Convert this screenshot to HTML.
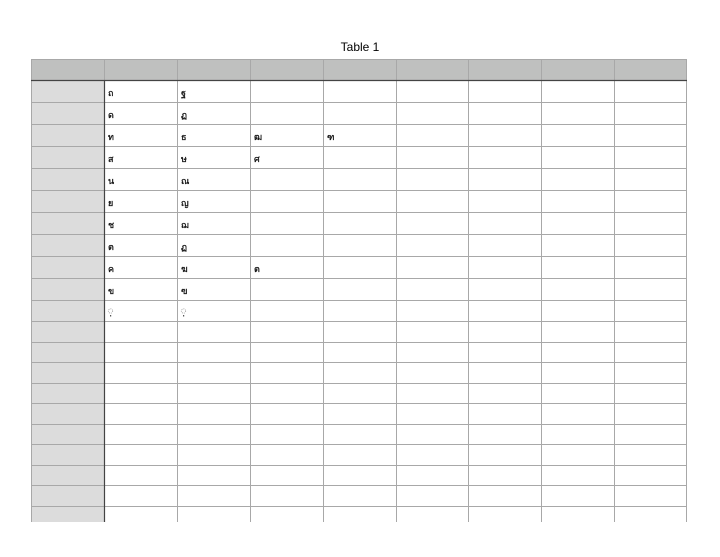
<!DOCTYPE html>
<html><head><meta charset="utf-8"><style>
body{margin:0;background:#fff;width:720px;height:552px;overflow:hidden}
text{font-family:"Liberation Sans","Noto Sans CJK SC",sans-serif}
</style></head><body>
<svg width="720" height="552" xmlns="http://www.w3.org/2000/svg">
<text x="360" y="51" font-size="12" text-anchor="middle" fill="#000">Table 1</text>
<rect x="31" y="59" width="656" height="21" fill="#bfc0bf"/>
<rect x="31" y="80" width="73" height="442" fill="#dcdcdc"/>
<g stroke="#a8a8a8" stroke-width="1">
<line x1="31" y1="59.5" x2="687" y2="59.5"/>
<line x1="31" y1="102.5" x2="687" y2="102.5"/>
<line x1="31" y1="124.5" x2="687" y2="124.5"/>
<line x1="31" y1="146.5" x2="687" y2="146.5"/>
<line x1="31" y1="168.5" x2="687" y2="168.5"/>
<line x1="31" y1="190.5" x2="687" y2="190.5"/>
<line x1="31" y1="212.5" x2="687" y2="212.5"/>
<line x1="31" y1="234.5" x2="687" y2="234.5"/>
<line x1="31" y1="256.5" x2="687" y2="256.5"/>
<line x1="31" y1="278.5" x2="687" y2="278.5"/>
<line x1="31" y1="300.5" x2="687" y2="300.5"/>
<line x1="31" y1="321.5" x2="687" y2="321.5"/>
<line x1="31" y1="342.5" x2="687" y2="342.5"/>
<line x1="31" y1="362.5" x2="687" y2="362.5"/>
<line x1="31" y1="383.5" x2="687" y2="383.5"/>
<line x1="31" y1="403.5" x2="687" y2="403.5"/>
<line x1="31" y1="424.5" x2="687" y2="424.5"/>
<line x1="31" y1="444.5" x2="687" y2="444.5"/>
<line x1="31" y1="465.5" x2="687" y2="465.5"/>
<line x1="31" y1="485.5" x2="687" y2="485.5"/>
<line x1="31" y1="506.5" x2="687" y2="506.5"/>
<line x1="31.5" y1="59" x2="31.5" y2="522"/>
<line x1="177.5" y1="59" x2="177.5" y2="522"/>
<line x1="250.5" y1="59" x2="250.5" y2="522"/>
<line x1="323.5" y1="59" x2="323.5" y2="522"/>
<line x1="396.5" y1="59" x2="396.5" y2="522"/>
<line x1="468.5" y1="59" x2="468.5" y2="522"/>
<line x1="541.5" y1="59" x2="541.5" y2="522"/>
<line x1="614.5" y1="59" x2="614.5" y2="522"/>
<line x1="686.5" y1="59" x2="686.5" y2="522"/>
</g>
<line x1="104.5" y1="59" x2="104.5" y2="80" stroke="#a8a8a8"/>
<line x1="31" y1="80.5" x2="687" y2="80.5" stroke="#444" stroke-width="1.2"/>
<line x1="104.5" y1="80" x2="104.5" y2="522" stroke="#444" stroke-width="1.2"/>
<g font-size="9" fill="#111" stroke="#111" stroke-width="0.3">
<text x="108" y="96">ถ</text><text x="181" y="96">ฐ</text>
<text x="108" y="118">ด</text><text x="181" y="118">ฏ</text>
<text x="108" y="140">ท</text><text x="181" y="140">ธ</text><text x="254" y="140">ฒ</text><text x="327" y="140">ฑ</text>
<text x="108" y="162">ส</text><text x="181" y="162">ษ</text><text x="254" y="162">ศ</text>
<text x="108" y="184">น</text><text x="181" y="184">ณ</text>
<text x="108" y="206">ย</text><text x="181" y="206">ญ</text>
<text x="108" y="228">ช</text><text x="181" y="228">ฌ</text>
<text x="108" y="250">ต</text><text x="181" y="250">ฏ</text>
<text x="108" y="272">ค</text><text x="181" y="272">ฆ</text><text x="254" y="272">ต</text>
<text x="108" y="294">ข</text><text x="181" y="294">ฃ</text>
</g>
<g fill="none" stroke="#999" stroke-width="0.8" stroke-dasharray="1 1">
<circle cx="110.5" cy="311" r="2.2"/><circle cx="183.5" cy="311" r="2.2"/>
</g>
<g fill="#555"><rect x="110" y="315" width="1.2" height="1.5"/><rect x="183" y="315" width="1.2" height="1.5"/></g>
</svg>
</body></html>
